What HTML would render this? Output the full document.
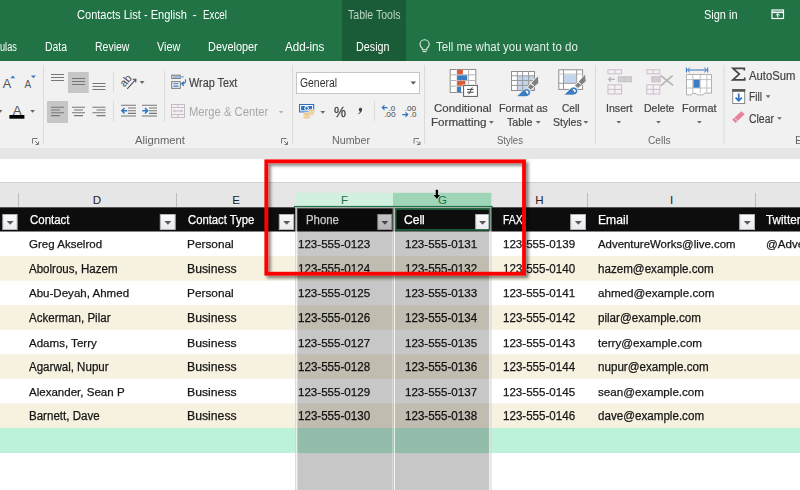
<!DOCTYPE html>
<html><head><meta charset="utf-8"><title>Contacts List - English - Excel</title>
<style>
html,body{margin:0;padding:0;}
body{width:800px;height:490px;position:relative;overflow:hidden;background:#fff;font-family:"Liberation Sans",sans-serif;}
.a{position:absolute;}
.t{position:absolute;white-space:nowrap;line-height:14px;font-size:12px;color:#1a1a1a;transform-origin:0 50%;}
.ct{color:#151515;font-size:12px;transform:scaleX(.967);-webkit-text-stroke:0.25px #151515;}
.fb{position:absolute;width:13px;height:14px;background:#f4f4f6;border:1px solid #b0b0b0;top:214px;}
.fb:after{content:"";position:absolute;left:3.3px;top:6px;border-left:3.5px solid transparent;border-right:3.5px solid transparent;border-top:4px solid #555;}
</style></head><body>

<!-- title bar -->
<div class="a" style="left:0;top:0;width:800px;height:61px;background:#217346"></div>
<div class="a" style="left:342px;top:0;width:64px;height:61px;background:#1a5c37"></div>

<!-- ribbon -->
<div class="a" style="left:0;top:61px;width:800px;height:87px;background:#f1f1f1"></div>
<div class="a" style="left:0;top:148px;width:800px;height:11px;background:#e6e6e6"></div>
<div class="a" style="left:0;top:159px;width:800px;height:23px;background:#fff"></div>
<div class="a" style="left:0;top:182px;width:800px;height:25px;background:#e6e6e6"></div>
<div class="a" style="left:0;top:182px;width:800px;height:1px;background:#d0d0d0"></div>

<!-- ribbon icons -->
<svg class="a" style="left:0;top:0" width="800" height="160" viewBox="0 0 800 160" font-family="Liberation Sans, sans-serif">
<!-- title icons -->
<g fill="none" stroke="#fff" stroke-width="1.2">
<rect x="772" y="10" width="11.500" height="8.500"/>
<path d="M772 12.300h11.500" stroke-width="1.600"/>
<path d="M777.750 17.500v-3.800M775.800 15.500l1.950-1.900 1.950 1.900" stroke-width="1"/>
</g>
<g fill="none" stroke="#e3efe8" stroke-width="1.100">
<path d="M422.300 48.200c-1.700-1.400-2.300-2.400-2.300-3.800a4.600 4.600 0 0 1 9.200 0c0 1.400-.6 2.400-2.300 3.800v1.600h-4.600z"/>
<path d="M422.600 51.600h4"/>
</g>
<!-- font group -->
<text x="2.800" y="87.600" font-size="12.700" fill="#555">A</text>
<path d="M10.400 78.200h4.800l-2.400-2.600z" fill="#3a7abf"/>
<text x="24.500" y="87.600" font-size="10" fill="#555">A</text>
<path d="M30.900 75.600h5l-2.500 2.600z" fill="#3a7abf"/>
<text x="12.700" y="114.600" font-size="13.300" fill="#555">A</text>
<rect x="9.400" y="115" width="15" height="3.700" fill="#000"/>
<path d="M-2 110h4.500l-2.250 2.800zM30.200 110h4.800l-2.400 2.800z" fill="#666"/>
<!-- group separators -->
<g stroke="#dadada" stroke-width="1" fill="none">
<path d="M43.500 65v79M292.500 65v79M424.500 65v79M595.500 65v79M724 65v79"/>
<path d="M113.500 72v20M113.500 101v21M164.500 71v51M374.500 101v20"/>
</g>
<!-- dialog launchers -->
<g stroke="#777" stroke-width="1" fill="none">
<path id="dl" d="M32.500 143.500v-5h5M35.200 141.200l3.300 3.300M38.500 141.500v3h-3"/>
<use href="#dl" x="249"/>
<use href="#dl" x="381.500"/>
</g>
<!-- alignment -->
<rect x="68" y="72" width="20.750" height="21" fill="#c6c6c6"/>
<rect x="47" y="101" width="21" height="22" fill="#c6c6c6"/>
<g stroke="#777" stroke-width="1.100" fill="none">
<path d="M51 74.500h13M51 77.500h13M51 80.500h13"/>
<path d="M72 78.500h13M72 81.500h13M72 84.500h13"/>
<path d="M92.500 83.500h13M92.500 86.500h13M92.500 89.500h13"/>
<path d="M51 107.200h13M51 110h9M51 112.800h13M51 115.600h9"/>
<path d="M72 107.200h13M74 110h9M72 112.800h13M74 115.600h9"/>
<path d="M92.500 107.200h13M96.500 110h9M92.500 112.800h13M96.500 115.600h9"/>
</g>
<!-- orientation -->
<text transform="translate(124.600 87.600) rotate(-50)" font-size="10.800" fill="#444">ab</text>
<path d="M127.200 88.800l8.600-9.400M132.600 79.300l3.300-.1-.2 3.300" stroke="#555" stroke-width="1.100" fill="none"/>
<path d="M139.700 81h4.800l-2.400 2.900z" fill="#666"/>
<!-- indent -->
<g stroke="#777" stroke-width="1.100" fill="none">
<path d="M121 105.300h15M121 116h15M128 108h8M128 110.700h8M128 113.400h8"/>
<path d="M142 105.300h15M142 116h15M149 108h8M149 110.700h8M149 113.400h8"/>
</g>
<g stroke="#2f72c0" stroke-width="1.400" fill="none">
<path d="M121.800 110.700h5.400M124.500 108l-2.700 2.700 2.700 2.700"/>
<path d="M142.300 110.700h5.400M145 108l2.700 2.700-2.700 2.700"/>
</g>
<!-- wrap text -->
<g fill="none" stroke-width="1">
<rect x="171.700" y="75.200" width="8.600" height="3.200" stroke="#707070" fill="#fff"/>
<path d="M173 76.900h10.800" stroke="#8db3dd" stroke-width="1.700"/>
<rect x="171.700" y="81.700" width="8.600" height="6.600" stroke="#707070" fill="#fff"/>
<path d="M173.300 83.800h5.200M173.300 86.100h5.200" stroke="#2f72c0" stroke-width="1.100"/>
<path d="M185.400 79.300c.9 3-.8 4.500-3.600 4.500M184 81.800l-2.300 2 2.300 2.100" stroke="#2f72c0" stroke-width="1.200"/>
</g>
<!-- merge & center -->
<g fill="none" stroke="#c6bcc6" stroke-width="1">
<rect x="171.500" y="104.500" width="13" height="13" fill="#f7f1f7"/>
<path d="M171.500 107.500h13M171.500 114.500h13M178 104.500v3M178 114.500v3"/>
<path d="M173.500 111h9M175 109.500l-1.500 1.500 1.500 1.500M181 109.500l1.500 1.500-1.500 1.500" stroke="#b9b9b9"/>
</g>
<path d="M278.800 111h4.600l-2.300 2.600z" fill="#b4b4b4"/>
<!-- number format combo -->
<rect x="296.500" y="72.500" width="123" height="21" fill="#fff" stroke="#c6c6c6"/>
<path d="M410.500 81.400h5.600l-2.800 3z" fill="#555"/>
<!-- accounting -->
<rect x="299" y="104" width="15.200" height="8.400" fill="#2b6fc3"/>
<rect x="300.600" y="105.500" width="12" height="5.400" fill="none" stroke="#fff" stroke-width="1"/>
<ellipse cx="306.600" cy="108.200" rx="2.300" ry="2.300" fill="#fff"/>
<ellipse cx="306.600" cy="108.200" rx="1.200" ry="1.500" fill="#2b6fc3"/>
<g fill="#eabf7a" stroke="#f4f0e8" stroke-width=".7">
<ellipse cx="311.500" cy="114" rx="3" ry="1.300"/>
<ellipse cx="311.500" cy="112.300" rx="3" ry="1.300"/>
<ellipse cx="311.500" cy="110.600" rx="3" ry="1.300"/>
<ellipse cx="306.800" cy="117.600" rx="3.600" ry="1.400"/>
<ellipse cx="306.800" cy="115.800" rx="3.600" ry="1.400"/>
<ellipse cx="306.800" cy="114" rx="3.600" ry="1.400"/>
</g>
<path d="M320.400 111h4.800l-2.400 2.800z" fill="#666"/>
<!-- comma style -->
<path d="M358.800 109.600a1.700 1.700 0 1 1 3.300.5c-.4 1.700-1.700 3.300-3.700 4.200l-.4-.6c1.100-.6 1.800-1.400 2-2.300-.8 0-1.300-.8-1.200-1.800z" fill="#444"/>
<!-- inc/dec decimal -->
<g font-size="8" fill="#444">
<text x="388.500" y="110.800">.0</text>
<text x="384" y="117.300" textLength="11.500" lengthAdjust="spacingAndGlyphs">.00</text>
<text x="404.700" y="110.800" textLength="11.500" lengthAdjust="spacingAndGlyphs">.00</text>
<text x="409.700" y="117.300">.0</text>
</g>
<g stroke="#2f72c0" stroke-width="1.200" fill="none">
<path d="M382.300 107.600h5.200M384.500 105.400l-2.200 2.200 2.200 2.200"/>
<path d="M402.300 114.600h5.400M405.500 112.400l2.200 2.200-2.200 2.200"/>
</g>
<!-- conditional formatting -->
<g>
<rect x="450.200" y="69.500" width="25.600" height="23" fill="#fff" stroke="#8e8e8e"/>
<path d="M450 74.800h26M450 80.500h26M450 86.200h26M468.600 69.400v23" stroke="#b4b4b4" fill="none"/><path d="M456.800 69.400v23" stroke="#dcdcdc" fill="none"/>
<rect x="457.100" y="69.800" width="5.800" height="4.500" fill="#dc5a3a"/>
<rect x="457.100" y="75.300" width="10.100" height="4.700" fill="#3b7cc2"/>
<rect x="457.100" y="81" width="8.300" height="4.700" fill="#dc5a3a"/>
<rect x="457.100" y="86.700" width="4" height="5.300" fill="#3b7cc2"/>
<rect x="462.600" y="84.400" width="15.600" height="12.800" fill="#f6f6f6"/><rect x="463.600" y="85.400" width="13.800" height="11" fill="#fff" stroke="#5a5a5a"/>
<path d="M467 89.400h6.600M467 92.200h6.600M472.300 87.400l-3.600 6.900" stroke="#444" stroke-width="1" fill="none"/>
</g>
<!-- format as table -->
<g>
<rect x="511.500" y="71.500" width="23" height="19" fill="#fff" stroke="#8e8e8e"/>
<rect x="517.500" y="76" width="16.500" height="14" fill="#c3d6ee"/>
<path d="M511.500 75.800h23M511.500 80.500h23M511.500 85.400h23M517.400 71.500v19M522.600 71.500v19M528.600 71.500v19" stroke="#9a9a9a" fill="none"/>
<g id="brush">
<path d="M538.200 75.400l.7 7.600-8.200 7-3.400-2.800z" fill="#808080" stroke="#f1f1f1" stroke-width="1"/>
<path d="M530.300 83l3.400 3" stroke="#f1f1f1" stroke-width="1.100" fill="none"/>
<path d="M516.600 96.600l6.700-6.600c1.600-1.600 4.200-1.800 5.900-.3 1.800 1.600 1.700 4.300-.2 5.900-1.300 1-3.300 1.100-5.800 1.100z" fill="#3b7cc2" stroke="#f1f1f1" stroke-width=".8"/>
<path d="M525.300 90.700c1.800-.6 3.200.5 3.300 2.200l-1.300 1.200z" fill="#fff"/>
</g>
</g>
<!-- cell styles -->
<g>
<rect x="558.800" y="69.800" width="23.800" height="19.600" fill="#fff" stroke="#8e8e8e"/>
<rect x="564" y="74.500" width="12.500" height="8.600" fill="#c3d6ee"/>
<path d="M558.800 74h23.800" stroke="#c8c8c8" fill="none"/>
<path d="M558.800 83.300h23.800M563.500 69.800v19.600M576.700 69.800v19.600" stroke="#9a9a9a" fill="none"/>
<use href="#brush" x="47.300" y="-1.600"/>
</g>
<path d="M489 121h4.800l-2.400 2.800zM535.800 121h4.800l-2.400 2.800zM583.500 121h4.800l-2.400 2.800z" fill="#666"/>
<!-- insert -->
<g fill="#f6eff6" stroke="#c9bec9" stroke-width="1">
<rect x="608" y="69.800" width="13.600" height="4"/><path d="M614.800 69.800v4" fill="none"/>
<rect x="618.200" y="76.800" width="13.400" height="5" fill="#d2cdd2"/><path d="M624.900 76.800v5" fill="none"/>
<rect x="608" y="84.800" width="13.600" height="9.200"/><path d="M614.800 84.800v9.200M608 89.400h13.600" fill="none"/>
<path d="M608.600 79.400h6.400M611 77l-2.400 2.400 2.400 2.400" fill="none" stroke="#b9b4b9" stroke-width="1.300"/>
</g>
<!-- delete -->
<g fill="#f6eff6" stroke="#c9bec9" stroke-width="1">
<rect x="646.800" y="69.800" width="13" height="4"/><path d="M653.300 69.800v4" fill="none"/>
<rect x="651.800" y="76.800" width="8.400" height="5" fill="#d2cdd2"/>
<rect x="646.800" y="84.800" width="13" height="9.200"/><path d="M653.300 84.800v9.200M646.800 89.400h13" fill="none"/>
<path d="M660.500 75.300l12.600 10M672.600 75.600l-11.800 10" fill="none" stroke="#b4b4b4" stroke-width="1.700"/>
</g>
<!-- format -->
<g>
<path d="M686.500 74.500h25v18.600h-7l-1.500 1.800h-5.500l-1.400-1.500h-3.600l-1.200 1.500h-4.800z" fill="#fff" stroke="#b0b0b0"/>
<path d="M686.500 79.600h25M686.500 88h25M692.800 74.500v18.600M700.200 74.500v18.600M706.800 74.500v18.600" stroke="#c0c0c0" fill="none"/>
<rect x="693.400" y="79.700" width="6.300" height="8" fill="#3b7cc2"/>
<path d="M686.400 67.500v5M707.700 67.500v5M687.500 70h19M689.800 67.800l-2.300 2.200 2.300 2.200M704.300 67.800l2.300 2.200-2.300 2.200" stroke="#2f72c0" stroke-width="1" fill="none"/>
</g>
<path d="M616.400 120.900h4.800l-2.400 2.700zM656.100 120.900h4.800l-2.400 2.700zM697 120.900h4.800l-2.400 2.700z" fill="#666"/>
<!-- autosum / fill / clear -->
<path d="M744.300 70.500v-2.200h-11.400l6.400 5.800-6.400 5.700h11.800v-2.300" fill="none" stroke="#444" stroke-width="1.700" stroke-linejoin="miter"/>
<rect x="732.700" y="89.500" width="12" height="14" fill="#fff" stroke="#8a8a8a"/>
<rect x="732.200" y="89" width="13" height="2.800" fill="#5a5a5a"/>
<path d="M738.700 93.500v7M735.600 97.600l3.100 3.100 3.100-3.100" fill="none" stroke="#2f72c0" stroke-width="1.700"/>
<path d="M741.400 111.200l3.300 3.100-9.200 8.600-3.400-3.200z" fill="#e9829b"/>
<path d="M734.200 117.800l3.400 3.200" stroke="#f6d5dc" stroke-width="1" fill="none"/>
<path d="M765.700 95.300h4.800l-2.400 2.600zM777.100 117.200h4.800l-2.400 2.600z" fill="#666"/>
</svg>


<!-- ribbon and title text -->
<!-- sheet -->
<svg class="a" style="left:0;top:200px" width="800" height="290" viewBox="0 200 800 290">
<rect x="0" y="207.300" width="800" height="24.200" fill="#0d0d0d"/>
<rect x="0" y="256.05" width="800" height="24.55" fill="#f7f1e0"/>
<rect x="0" y="305.15" width="800" height="24.55" fill="#f7f1e0"/>
<rect x="0" y="354.25" width="800" height="24.55" fill="#f7f1e0"/>
<rect x="0" y="403.35" width="800" height="24.55" fill="#f7f1e0"/>
<rect x="0" y="427.90" width="800" height="25.100" fill="#bdf2da"/>
</svg>
<div class="t ct" style="left:29.3px;top:237.35px;font-size:11.8px;transform:scaleX(0.978)">Greg Akselrod</div>
<div class="t ct" style="left:187.2px;top:237.35px;font-size:11.8px;transform:scaleX(1.002)">Personal</div>
<div class="t ct" style="left:298px;top:237.35px;font-size:11.8px;transform:scaleX(0.981)">123-555-0123</div>
<div class="t ct" style="left:405px;top:237.35px;font-size:11.8px;transform:scaleX(0.981)">123-555-0131</div>
<div class="t ct" style="left:503px;top:237.35px;font-size:11.8px;transform:scaleX(0.981)">123-555-0139</div>
<div class="t ct" style="left:598px;top:237.35px;font-size:11.8px;transform:scaleX(0.967)">AdventureWorks@live.com</div>
<div class="t ct" style="left:766px;top:237.35px;font-size:11.8px;transform:scaleX(0.981)">@Adve</div>
<div class="t ct" style="left:29.3px;top:261.90px;font-size:12px;transform:scaleX(0.962)">Abolrous, Hazem</div>
<div class="t ct" style="left:187.2px;top:261.90px;font-size:12px;transform:scaleX(1.020)">Business</div>
<div class="t ct" style="left:298px;top:261.90px;font-size:12px;transform:scaleX(0.965)">123-555-0124</div>
<div class="t ct" style="left:405px;top:261.90px;font-size:12px;transform:scaleX(0.965)">123-555-0132</div>
<div class="t ct" style="left:503px;top:261.90px;font-size:12px;transform:scaleX(0.965)">123-555-0140</div>
<div class="t ct" style="left:598px;top:261.90px;font-size:12px;transform:scaleX(0.968)">hazem@example.com</div>
<div class="t ct" style="left:29.3px;top:286.45px;font-size:11.8px;transform:scaleX(0.978)">Abu-Deyah, Ahmed</div>
<div class="t ct" style="left:187.2px;top:286.45px;font-size:11.8px;transform:scaleX(1.002)">Personal</div>
<div class="t ct" style="left:298px;top:286.45px;font-size:11.8px;transform:scaleX(0.981)">123-555-0125</div>
<div class="t ct" style="left:405px;top:286.45px;font-size:11.8px;transform:scaleX(0.981)">123-555-0133</div>
<div class="t ct" style="left:503px;top:286.45px;font-size:11.8px;transform:scaleX(0.981)">123-555-0141</div>
<div class="t ct" style="left:598px;top:286.45px;font-size:11.8px;transform:scaleX(0.984)">ahmed@example.com</div>
<div class="t ct" style="left:29.3px;top:311.00px;font-size:12px;transform:scaleX(0.962)">Ackerman, Pilar</div>
<div class="t ct" style="left:187.2px;top:311.00px;font-size:12px;transform:scaleX(1.020)">Business</div>
<div class="t ct" style="left:298px;top:311.00px;font-size:12px;transform:scaleX(0.965)">123-555-0126</div>
<div class="t ct" style="left:405px;top:311.00px;font-size:12px;transform:scaleX(0.965)">123-555-0134</div>
<div class="t ct" style="left:503px;top:311.00px;font-size:12px;transform:scaleX(0.965)">123-555-0142</div>
<div class="t ct" style="left:598px;top:311.00px;font-size:12px;transform:scaleX(0.968)">pilar@example.com</div>
<div class="t ct" style="left:29.3px;top:335.55px;font-size:11.8px;transform:scaleX(0.978)">Adams, Terry</div>
<div class="t ct" style="left:187.2px;top:335.55px;font-size:11.8px;transform:scaleX(1.037)">Business</div>
<div class="t ct" style="left:298px;top:335.55px;font-size:11.8px;transform:scaleX(0.981)">123-555-0127</div>
<div class="t ct" style="left:405px;top:335.55px;font-size:11.8px;transform:scaleX(0.981)">123-555-0135</div>
<div class="t ct" style="left:503px;top:335.55px;font-size:11.8px;transform:scaleX(0.981)">123-555-0143</div>
<div class="t ct" style="left:598px;top:335.55px;font-size:11.8px;transform:scaleX(0.984)">terry@example.com</div>
<div class="t ct" style="left:29.3px;top:360.10px;font-size:12px;transform:scaleX(0.962)">Agarwal, Nupur</div>
<div class="t ct" style="left:187.2px;top:360.10px;font-size:12px;transform:scaleX(1.020)">Business</div>
<div class="t ct" style="left:298px;top:360.10px;font-size:12px;transform:scaleX(0.965)">123-555-0128</div>
<div class="t ct" style="left:405px;top:360.10px;font-size:12px;transform:scaleX(0.965)">123-555-0136</div>
<div class="t ct" style="left:503px;top:360.10px;font-size:12px;transform:scaleX(0.965)">123-555-0144</div>
<div class="t ct" style="left:598px;top:360.10px;font-size:12px;transform:scaleX(0.968)">nupur@example.com</div>
<div class="t ct" style="left:29.3px;top:384.65px;font-size:11.8px;transform:scaleX(0.978)">Alexander, Sean P</div>
<div class="t ct" style="left:187.2px;top:384.65px;font-size:11.8px;transform:scaleX(1.037)">Business</div>
<div class="t ct" style="left:298px;top:384.65px;font-size:11.8px;transform:scaleX(0.981)">123-555-0129</div>
<div class="t ct" style="left:405px;top:384.65px;font-size:11.8px;transform:scaleX(0.981)">123-555-0137</div>
<div class="t ct" style="left:503px;top:384.65px;font-size:11.8px;transform:scaleX(0.981)">123-555-0145</div>
<div class="t ct" style="left:598px;top:384.65px;font-size:11.8px;transform:scaleX(0.984)">sean@example.com</div>
<div class="t ct" style="left:29.3px;top:409.20px;font-size:12px;transform:scaleX(0.962)">Barnett, Dave</div>
<div class="t ct" style="left:187.2px;top:409.20px;font-size:12px;transform:scaleX(1.020)">Business</div>
<div class="t ct" style="left:298px;top:409.20px;font-size:12px;transform:scaleX(0.965)">123-555-0130</div>
<div class="t ct" style="left:405px;top:409.20px;font-size:12px;transform:scaleX(0.965)">123-555-0138</div>
<div class="t ct" style="left:503px;top:409.20px;font-size:12px;transform:scaleX(0.965)">123-555-0146</div>
<div class="t ct" style="left:598px;top:409.20px;font-size:12px;transform:scaleX(0.968)">dave@example.com</div>
<!-- ribbon, title and header text -->
<div class="t" style="left:76.5px;top:8.0px;font-size:12px;color:#fff;transform:scaleX(0.921);">Contacts List - English</div>
<div class="t" style="left:192.5px;top:8.0px;font-size:12px;color:#fff;transform:scaleX(1.000);">-</div>
<div class="t" style="left:203px;top:8.0px;font-size:12px;color:#fff;transform:scaleX(0.818);">Excel</div>
<div class="t" style="left:347.5px;top:8.0px;font-size:12px;color:#bcd5c6;transform:scaleX(0.878);">Table Tools</div>
<div class="t" style="left:704px;top:8.0px;font-size:12px;color:#fff;transform:scaleX(0.913);">Sign in</div>
<div class="t" style="left:0px;top:40.0px;font-size:12px;color:#fff;transform:scaleX(0.763);">ulas</div>
<div class="t" style="left:44.7px;top:40.0px;font-size:12px;color:#fff;transform:scaleX(0.868);">Data</div>
<div class="t" style="left:94.8px;top:40.0px;font-size:12px;color:#fff;transform:scaleX(0.874);">Review</div>
<div class="t" style="left:156.8px;top:40.0px;font-size:12px;color:#fff;transform:scaleX(0.907);">View</div>
<div class="t" style="left:208px;top:40.0px;font-size:12px;color:#fff;transform:scaleX(0.909);">Developer</div>
<div class="t" style="left:285.3px;top:40.0px;font-size:12px;color:#fff;transform:scaleX(0.968);">Add-ins</div>
<div class="t" style="left:356px;top:40.0px;font-size:12px;color:#fff;transform:scaleX(0.897);">Design</div>
<div class="t" style="left:435.9px;top:40.0px;font-size:12px;color:#e3efe8;transform:scaleX(0.958);">Tell me what you want to do</div>
<div class="t" style="left:189.4px;top:75.6px;font-size:12px;color:#444;-webkit-text-stroke:0.2px #444;transform:scaleX(0.903);">Wrap Text</div>
<div class="t" style="left:189.3px;top:105.0px;font-size:12px;color:#a8a8a8;transform:scaleX(0.936);">Merge &amp; Center</div>
<div class="t" style="left:135px;top:133.6px;font-size:10px;color:#666;transform:scaleX(1.124);">Alignment</div>
<div class="t" style="left:300px;top:76.0px;font-size:12px;color:#333;transform:scaleX(0.866);">General</div>
<div class="t" style="left:333.6px;top:104.6px;font-size:15px;color:#444;-webkit-text-stroke:0.2px #444;transform:scaleX(0.899);-webkit-text-stroke:0.3px #444;">%</div>
<div class="t" style="left:332px;top:133.6px;font-size:10px;color:#666;transform:scaleX(1.068);">Number</div>
<div class="t" style="left:434px;top:100.5px;font-size:11px;color:#444;-webkit-text-stroke:0.2px #444;transform:scaleX(1.045);">Conditional</div>
<div class="t" style="left:431px;top:115.4px;font-size:11px;color:#444;-webkit-text-stroke:0.2px #444;transform:scaleX(1.054);">Formatting</div>
<div class="t" style="left:499px;top:100.5px;font-size:11px;color:#444;-webkit-text-stroke:0.2px #444;transform:scaleX(0.982);">Format as</div>
<div class="t" style="left:507px;top:115.4px;font-size:11px;color:#444;-webkit-text-stroke:0.2px #444;transform:scaleX(0.970);">Table</div>
<div class="t" style="left:561.8px;top:100.5px;font-size:11px;color:#444;-webkit-text-stroke:0.2px #444;transform:scaleX(0.923);">Cell</div>
<div class="t" style="left:552.8px;top:115.4px;font-size:11px;color:#444;-webkit-text-stroke:0.2px #444;transform:scaleX(0.961);">Styles</div>
<div class="t" style="left:496.5px;top:133.6px;font-size:10px;color:#666;transform:scaleX(0.951);">Styles</div>
<div class="t" style="left:605.7px;top:100.5px;font-size:11px;color:#444;-webkit-text-stroke:0.2px #444;transform:scaleX(0.963);">Insert</div>
<div class="t" style="left:643.8px;top:100.5px;font-size:11px;color:#444;-webkit-text-stroke:0.2px #444;transform:scaleX(0.956);">Delete</div>
<div class="t" style="left:681.7px;top:100.5px;font-size:11px;color:#444;-webkit-text-stroke:0.2px #444;transform:scaleX(0.990);">Format</div>
<div class="t" style="left:648px;top:133.6px;font-size:10px;color:#666;transform:scaleX(1.016);">Cells</div>
<div class="t" style="left:749.4px;top:68.5px;font-size:12px;color:#444;-webkit-text-stroke:0.2px #444;transform:scaleX(0.938);">AutoSum</div>
<div class="t" style="left:749.4px;top:89.6px;font-size:12px;color:#444;-webkit-text-stroke:0.2px #444;transform:scaleX(0.848);">Fill</div>
<div class="t" style="left:749.4px;top:111.5px;font-size:12px;color:#444;-webkit-text-stroke:0.2px #444;transform:scaleX(0.871);">Clear</div>
<div class="t" style="left:794.7px;top:133.6px;font-size:10px;color:#666;transform:scaleX(1.154);">Editing</div>
<div class="t" style="left:29.7px;top:212.8px;font-size:12px;color:#fff;transform:scaleX(0.955);-webkit-text-stroke:0.25px #fff;">Contact</div>
<div class="t" style="left:187.5px;top:212.8px;font-size:12px;color:#fff;transform:scaleX(0.939);-webkit-text-stroke:0.25px #fff;">Contact Type</div>
<div class="t" style="left:306.3px;top:212.8px;font-size:12px;color:#fff;transform:scaleX(0.948);-webkit-text-stroke:0.25px #fff;">Phone</div>
<div class="t" style="left:404.2px;top:212.8px;font-size:12px;color:#fff;transform:scaleX(1.006);-webkit-text-stroke:0.25px #fff;">Cell</div>
<div class="t" style="left:502.8px;top:212.8px;font-size:12px;color:#fff;transform:scaleX(0.868);-webkit-text-stroke:0.25px #fff;">FAX</div>
<div class="t" style="left:598.2px;top:212.8px;font-size:12px;color:#fff;transform:scaleX(1.013);-webkit-text-stroke:0.25px #fff;">Email</div>
<div class="t" style="left:766.2px;top:212.8px;font-size:12px;color:#fff;transform:scaleX(0.979);-webkit-text-stroke:0.25px #fff;">Twitter</div>
<div class="a" style="left:18px;top:193px;width:1px;height:14px;background:#bdbdbd"></div>
<div class="a" style="left:176px;top:193px;width:1px;height:14px;background:#bdbdbd"></div>
<div class="a" style="left:587px;top:193px;width:1px;height:14px;background:#bdbdbd"></div>
<div class="a" style="left:755px;top:193px;width:1px;height:14px;background:#bdbdbd"></div>
<svg class="a" style="left:280px;top:190px" width="230" height="300" viewBox="280 190 230 300"><rect x="295.800" y="192.800" width="97.200" height="13.400" fill="#d2f0e0"/><rect x="393" y="192.800" width="98.300" height="13.400" fill="#9fd5b7"/><rect x="294" y="205.900" width="198.800" height="1.400" fill="#217346"/></svg>
<div class="t" style="left:87px;top:192.6px;width:20px;text-align:center;color:#222;font-size:11.6px;">D</div>
<div class="t" style="left:226px;top:192.6px;width:20px;text-align:center;color:#222;font-size:11.6px;">E</div>
<div class="t" style="left:334.5px;top:192.6px;width:20px;text-align:center;color:#217346;font-size:11.6px;">F</div>
<div class="t" style="left:432.5px;top:192.6px;width:20px;text-align:center;color:#217346;font-size:11.6px;">G</div>
<div class="t" style="left:529.5px;top:192.6px;width:20px;text-align:center;color:#222;font-size:11.6px;">H</div>
<div class="t" style="left:661.5px;top:192.6px;width:20px;text-align:center;color:#222;font-size:11.6px;">I</div>
<svg class="a" style="left:0;top:210px" width="800" height="24" viewBox="0 210 800 24"><defs><linearGradient id="bg" x1="0" y1="0" x2="0" y2="1"><stop offset="0" stop-color="#fbfbfd"/><stop offset="1" stop-color="#e9e9ef"/></linearGradient></defs><rect x="2.8" y="214.500" width="14.3" height="15" fill="url(#bg)" stroke="#b4b4b4"/><path d="M6.7 221h7l-3.500 3.800z" fill="#5a5a5a"/><rect x="160.3" y="214.500" width="14.9" height="15" fill="url(#bg)" stroke="#b4b4b4"/><path d="M164.4 221h7l-3.500 3.800z" fill="#5a5a5a"/><rect x="279.3" y="214.500" width="14.4" height="15" fill="url(#bg)" stroke="#b4b4b4"/><path d="M283.2 221h7l-3.500 3.800z" fill="#5a5a5a"/><rect x="377.8" y="214.500" width="13.9" height="15" fill="url(#bg)" stroke="#b4b4b4"/><path d="M381.4 221h7l-3.500 3.800z" fill="#5a5a5a"/><rect x="475.7" y="214.500" width="13.4" height="15" fill="url(#bg)" stroke="#b4b4b4"/><path d="M479.1 221h7l-3.500 3.800z" fill="#5a5a5a"/><rect x="570.7" y="214.500" width="14.8" height="15" fill="url(#bg)" stroke="#b4b4b4"/><path d="M574.8 221h7l-3.500 3.800z" fill="#5a5a5a"/><rect x="739.7" y="214.500" width="14.8" height="15" fill="url(#bg)" stroke="#b4b4b4"/><path d="M743.8 221h7l-3.500 3.800z" fill="#5a5a5a"/></svg>
<svg class="a" style="left:280px;top:200px" width="230" height="290" viewBox="280 200 230 290"><rect x="297.200" y="208.300" width="95.600" height="282" fill="#000" fill-opacity="0.22"/><rect x="395" y="231.500" width="94.500" height="259" fill="#000" fill-opacity="0.22"/><rect x="295.300" y="207.300" width="196" height="1" fill="#d2d2d2"/><rect x="295.300" y="207.300" width="1" height="283" fill="#cfcfcf"/><rect x="296.300" y="208.300" width="0.900" height="282" fill="#f4f4f4"/><rect x="392.800" y="208.300" width="0.700" height="282" fill="#fff"/><rect x="393.500" y="208.300" width="0.800" height="282" fill="#8c8c8c"/><rect x="394.300" y="208.300" width="0.700" height="282" fill="#fff"/><rect x="489.500" y="208.300" width="0.900" height="282" fill="#fff"/><rect x="490.400" y="208.300" width="1" height="282" fill="#cfcfcf"/><rect x="395.700" y="209" width="93.800" height="20.900" fill="none" stroke="#1f6e43" stroke-width="1.500"/></svg>

<!-- red callout -->
<svg class="a" style="left:250px;top:150px" width="300" height="140" viewBox="250 150 300 140"><defs><filter id="sh" x="-10%" y="-10%" width="125%" height="125%"><feDropShadow dx="2.500" dy="2.500" stdDeviation="1.600" flood-color="#000" flood-opacity="0.500"/></filter></defs><rect x="266.300" y="161.300" width="257.700" height="112.400" fill="none" stroke="#fe0000" stroke-width="3.800" filter="url(#sh)"/></svg>
<!-- cursor -->
<svg class="a" style="left:428px;top:186px" width="16" height="16" viewBox="428 186 16 16"><path d="M435.700 189.800h2.400v5.100h2l-3.200 4.200-3.400-4.200h2.200z" fill="#000" stroke="#fff" stroke-width="0.700" paint-order="stroke"/></svg>
</body></html>
